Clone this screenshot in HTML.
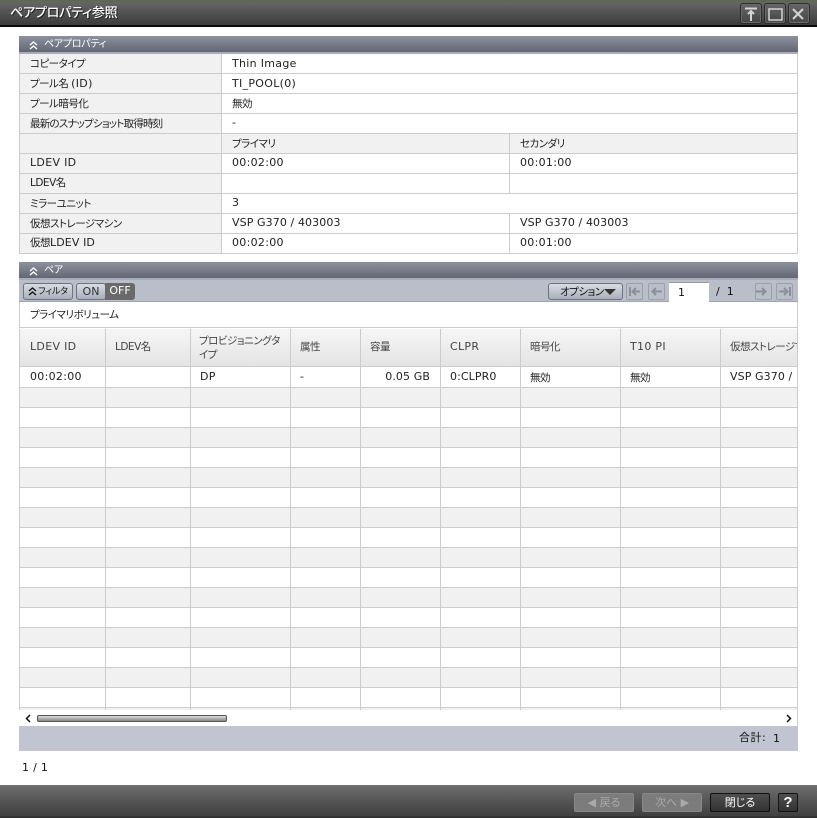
<!DOCTYPE html>
<html><head><meta charset="utf-8"><style>
html,body{margin:0;padding:0;background:#fff}
body{width:817px;height:818px;position:relative;overflow:hidden;font:11px/14px "DejaVu Sans","Noto Sans CJK JP",sans-serif;color:#222}
div{position:absolute;box-sizing:border-box;white-space:nowrap}
.t{font-family:"DejaVu Sans","Noto Sans CJK JP",sans-serif;font-size:11px;letter-spacing:.3px;margin-top:2px}
.v{letter-spacing:.1px}
.j{font-family:"DejaVu Sans","Noto Sans CJK JP","IPAGothic",sans-serif;font-size:10.500px;letter-spacing:-.5px;font-feature-settings:"palt";margin-top:1px}
.h{left:19px;width:779px;height:18px;background:linear-gradient(#8d919e,#636774);border-bottom:2px solid #a9adbb;color:#fff}
.hl{background:#ccc}
.btn{border:1px solid #6d7280;border-radius:3px;background:linear-gradient(#d8dbe2,#a9aeba)}
.nav{border:1px solid #9a9fab;background:#b9bec9;width:17px;height:17px;top:283px;border-radius:2px}
.wb{top:3px;width:22px;height:21px;border:1px solid #2c2c2c;border-radius:3px;background:linear-gradient(#666,#454545);box-shadow:inset 0 0 0 1px #6a6a6a}
.fb{top:793px;width:60px;height:19px;border-radius:2px;text-align:center;line-height:17px;margin-top:0}
</style></head><body>

<!-- title bar -->
<div style="left:0;top:0;width:817px;height:27px;background:linear-gradient(#5f6a46 0,#5f6a46 1px,#666 2px,#3c3c3c 25px);border-bottom:2px solid #0c0c0c"></div>
<div class="j" style="left:10px;top:5px;font-size:13px;letter-spacing:-.2px;line-height:16px;color:#fff;font-weight:500;text-shadow:1px 1px 0 #222">ペアプロパティ参照</div>
<div class="wb" style="left:740px"></div>
<div class="wb" style="left:764px"></div>
<div class="wb" style="left:788px"></div>
<svg style="position:absolute;left:740px;top:3px" width="70" height="21" fill="none" stroke="#d4d4d4"><path d="M5 5.500h12M11 18V8M8 11l3-3 3 3" stroke-width="2"/><rect x="29" y="6" width="13" height="11" stroke-width="1.500"/><path d="M53 6l10 10M63 6l-10 10" stroke-width="2"/></svg>

<!-- property section -->
<div class="h" style="top:36px"></div>
<div class="j" style="left:44px;top:37px;color:#fff;font-size:10px;letter-spacing:-.3px">ペアプロパティ</div>
<svg style="position:absolute;left:29px;top:41px" width="9" height="9" fill="none" stroke="#fff" stroke-width="1.400"><path d="M1 4l3.500-3 3.500 3M1 8l3.500-3 3.500 3"/></svg>

<div style="left:19px;top:54px;width:779px;height:200px;border:1px solid #ccc;border-width:0 1px 0 1px;background:linear-gradient(90deg,#f1f1f1 0,#f1f1f1 202px,#fff 202px);"></div>
<div style="left:222px;top:134px;width:575px;height:19px;background:#f1f1f1"></div>
<div class="hl" style="left:19px;top:73px;width:779px;height:1px"></div>
<div class="hl" style="left:19px;top:93px;width:779px;height:1px"></div>
<div class="hl" style="left:19px;top:113px;width:779px;height:1px"></div>
<div class="hl" style="left:19px;top:133px;width:779px;height:1px"></div>
<div class="hl" style="left:19px;top:153px;width:779px;height:1px"></div>
<div class="hl" style="left:19px;top:173px;width:779px;height:1px"></div>
<div class="hl" style="left:19px;top:193px;width:779px;height:1px"></div>
<div class="hl" style="left:19px;top:213px;width:779px;height:1px"></div>
<div class="hl" style="left:19px;top:233px;width:779px;height:1px"></div>
<div class="hl" style="left:19px;top:253px;width:779px;height:1px"></div>
<div class="hl" style="left:221px;top:54px;width:1px;height:200px"></div>
<div class="hl" style="left:509px;top:134px;width:1px;height:60px"></div>
<div class="hl" style="left:509px;top:214px;width:1px;height:40px"></div>

<div class="j" style="left:30px;top:56px">コピータイプ</div><div class="t" style="left:232px;top:55px">Thin Image</div>
<div class="j" style="left:30px;top:76px">プール名 <span style="letter-spacing:.3px;font-size:11px">(ID)</span></div><div class="t" style="left:232px;top:75px">TI_POOL(0)</div>
<div class="j" style="left:30px;top:96px">プール暗号化</div><div class="j" style="left:232px;top:96px">無効</div>
<div class="j" style="left:30px;top:116px;letter-spacing:-.8px">最新のスナップショット取得時刻</div><div class="t" style="left:232px;top:114px">-</div>
<div class="j" style="left:232px;top:136px">プライマリ</div><div class="j" style="left:520px;top:136px">セカンダリ</div>
<div class="t" style="left:30px;top:154px">LDEV ID</div><div class="t" style="left:232px;top:154px">00:02:00</div><div class="t" style="left:520px;top:154px">00:01:00</div>
<div class="j" style="left:30px;top:175px">LDEV名</div>
<div class="j" style="left:30px;top:196px">ミラーユニット</div><div class="t" style="left:232px;top:194px">3</div>
<div class="j" style="left:30px;top:216px">仮想ストレージマシン</div><div class="t v" style="left:232px;top:214px">VSP G370 / 403003</div><div class="t v" style="left:520px;top:214px">VSP G370 / 403003</div>
<div class="j" style="left:30px;top:235px">仮想<span style="letter-spacing:.1px;font-size:11px">LDEV ID</span></div><div class="t" style="left:232px;top:234px">00:02:00</div><div class="t" style="left:520px;top:234px">00:01:00</div>

<!-- pair section -->
<div class="h" style="top:262px"></div>
<div class="j" style="left:44px;top:263px;color:#fff;font-size:10px;letter-spacing:-.3px">ペア</div>
<svg style="position:absolute;left:29px;top:267px" width="9" height="9" fill="none" stroke="#fff" stroke-width="1.400"><path d="M1 4l3.500-3 3.500 3M1 8l3.500-3 3.500 3"/></svg>
<div style="left:19px;top:280px;width:779px;height:22px;background:#b9bec9;border-bottom:1px solid #9fa3ae"></div>
<div class="btn" style="left:23px;top:283px;width:50px;height:17px"></div>
<svg style="position:absolute;left:28px;top:287px" width="9" height="9" fill="none" stroke="#111" stroke-width="1.400"><path d="M1 4l3.500-3 3.500 3M1 8l3.500-3 3.500 3"/></svg>
<div class="j" style="left:38px;top:284px;font-size:9px;letter-spacing:-.2px;color:#111">フィルタ</div>
<div class="btn" style="left:76px;top:283px;width:30px;height:17px;text-align:center;line-height:15px;color:#333">ON</div>
<div style="left:105px;top:283px;width:30px;height:17px;background:#6a6a6a;border-radius:0 3px 3px 0;color:#fff;text-align:center;line-height:16px">OFF</div>

<div class="btn" style="left:548px;top:283px;width:75px;height:17px"></div>
<div class="j" style="left:560px;top:284px;color:#111">オプション</div>
<svg style="position:absolute;left:604px;top:289px" width="12" height="7"><path d="M0 0h12L6 6z" fill="#333"/></svg>
<div class="nav" style="left:626px"></div><div class="nav" style="left:648px"></div>
<div class="nav" style="left:755px"></div><div class="nav" style="left:776px"></div>
<svg style="position:absolute;left:626px;top:283px" width="172" height="17" fill="none" stroke="#8a8f9b" stroke-width="2"><path d="M4 4v9M14 8.500H7M10 5L6.500 8.500 10 12M36 8.500H27M30 5L26.500 8.500 30 12M130 8.500h9M136 5l3.500 3.500L136 12M153 8.500h8M158 5l3.500 3.500L158 12M164 4v9"/></svg>
<div style="left:669px;top:282px;width:40px;height:20px;background:#fff;padding:3px 0 0 9px;color:#111;border-top:1px solid #999">1</div>
<div class="t" style="left:716px;top:283px;color:#111;word-spacing:3px">/ 1</div>

<div style="left:19px;top:302px;width:779px;height:26px;background:#fff;border:1px solid #ccc;border-width:0 1px 1px 1px"></div>
<div class="j" style="left:30px;top:307px">プライマリボリューム</div>

<!-- table -->
<div style="left:19px;top:329px;width:779px;height:38px;background:linear-gradient(#f6f6f6,#e4e4e4);border-bottom:1px solid #ccc"></div>
<div style="left:19px;top:367px;width:779px;height:20px;background:#fff"></div>
<div style="left:19px;top:387px;width:779px;height:323px;background:linear-gradient(#ccc 0,#ccc 1px,#f1f1f1 1px,#f1f1f1 20px,#ccc 20px,#ccc 21px,#fff 21px,#fff 40px);background-size:100% 40px"></div>
<div style="left:19px;top:329px;width:1px;height:381px;background:#ccc"></div>
<div style="left:797px;top:302px;width:1px;height:424px;background:#ccc"></div>
<div class="hl" style="left:105px;top:329px;width:1px;height:381px"></div>
<div class="hl" style="left:190px;top:329px;width:1px;height:381px"></div>
<div class="hl" style="left:290px;top:329px;width:1px;height:381px"></div>
<div class="hl" style="left:360px;top:329px;width:1px;height:381px"></div>
<div class="hl" style="left:440px;top:329px;width:1px;height:381px"></div>
<div class="hl" style="left:520px;top:329px;width:1px;height:381px"></div>
<div class="hl" style="left:620px;top:329px;width:1px;height:381px"></div>
<div class="hl" style="left:720px;top:329px;width:1px;height:381px"></div>

<div class="t" style="left:30px;top:338px;color:#444">LDEV ID</div>
<div class="j" style="left:115px;top:339px;color:#444">LDEV名</div>
<div class="j" style="left:199px;top:333px;line-height:14px;color:#444">プロビジョニングタ<br>イプ</div>
<div class="j" style="left:300px;top:339px;color:#444">属性</div>
<div class="j" style="left:370px;top:339px;color:#444">容量</div>
<div class="t" style="left:450px;top:338px;color:#444">CLPR</div>
<div class="j" style="left:530px;top:339px;color:#444">暗号化</div>
<div class="t" style="left:630px;top:338px;color:#444">T10 PI</div>
<div class="j" style="left:730px;top:339px;width:67px;overflow:hidden;color:#444">仮想ストレージマシン</div>

<div class="t" style="left:30px;top:368px">00:02:00</div>
<div class="t" style="left:200px;top:368px">DP</div>
<div class="t" style="left:300px;top:368px">-</div>
<div class="t v" style="left:361px;top:368px;width:69px;text-align:right">0.05 GB</div>
<div class="t v" style="left:450px;top:368px">0:CLPR0</div>
<div class="j" style="left:530px;top:370px">無効</div>
<div class="j" style="left:630px;top:370px">無効</div>
<div class="t v" style="left:730px;top:368px;width:67px;overflow:hidden">VSP G370 /</div>

<!-- scrollbar -->
<div style="left:20px;top:710px;width:777px;height:16px;background:#fff"></div>
<div style="left:37px;top:715px;width:190px;height:7px;background:linear-gradient(#ddd,#888);border:1px solid #555;border-radius:2px"></div>
<svg style="position:absolute;left:25px;top:714px" width="770" height="9" fill="none" stroke="#111" stroke-width="1.500"><path d="M5 1L1.500 4.500 5 8M762 1l3.500 3.500L762 8"/></svg>

<!-- footer -->
<div style="left:19px;top:726px;width:779px;height:25px;background:#c0c5d1"></div>
<div class="j" style="left:739px;top:730px;color:#111;letter-spacing:.5px;font-size:11px">合計:</div>
<div class="t" style="left:773px;top:730px;color:#111">1</div>
<div class="t" style="left:22px;top:759px;color:#111">1 / 1</div>

<!-- bottom bar -->
<div style="left:0;top:785px;width:817px;height:33px;background:linear-gradient(#777 0,#6b6b6b 2px,#3f3f3f 31px,#2c2c2c 32px)"></div>
<div class="fb j" style="left:574px;background:#7c7c7c;border:1px solid #888;color:#aaa;letter-spacing:0;font-size:11px">◀ 戻る</div>
<div class="fb j" style="left:642px;background:#7c7c7c;border:1px solid #888;color:#aaa;letter-spacing:0;font-size:11px">次へ ▶</div>
<div class="fb j" style="left:710px;background:linear-gradient(#4e4e4e,#333);border:1px solid #111;color:#fff;letter-spacing:0;font-size:11px">閉じる</div>
<div class="fb" style="left:778px;width:20px;background:linear-gradient(#4e4e4e,#333);border:1px solid #111;color:#fff;font:bold 15px/17px 'Liberation Sans',sans-serif">?</div>
</body></html>
